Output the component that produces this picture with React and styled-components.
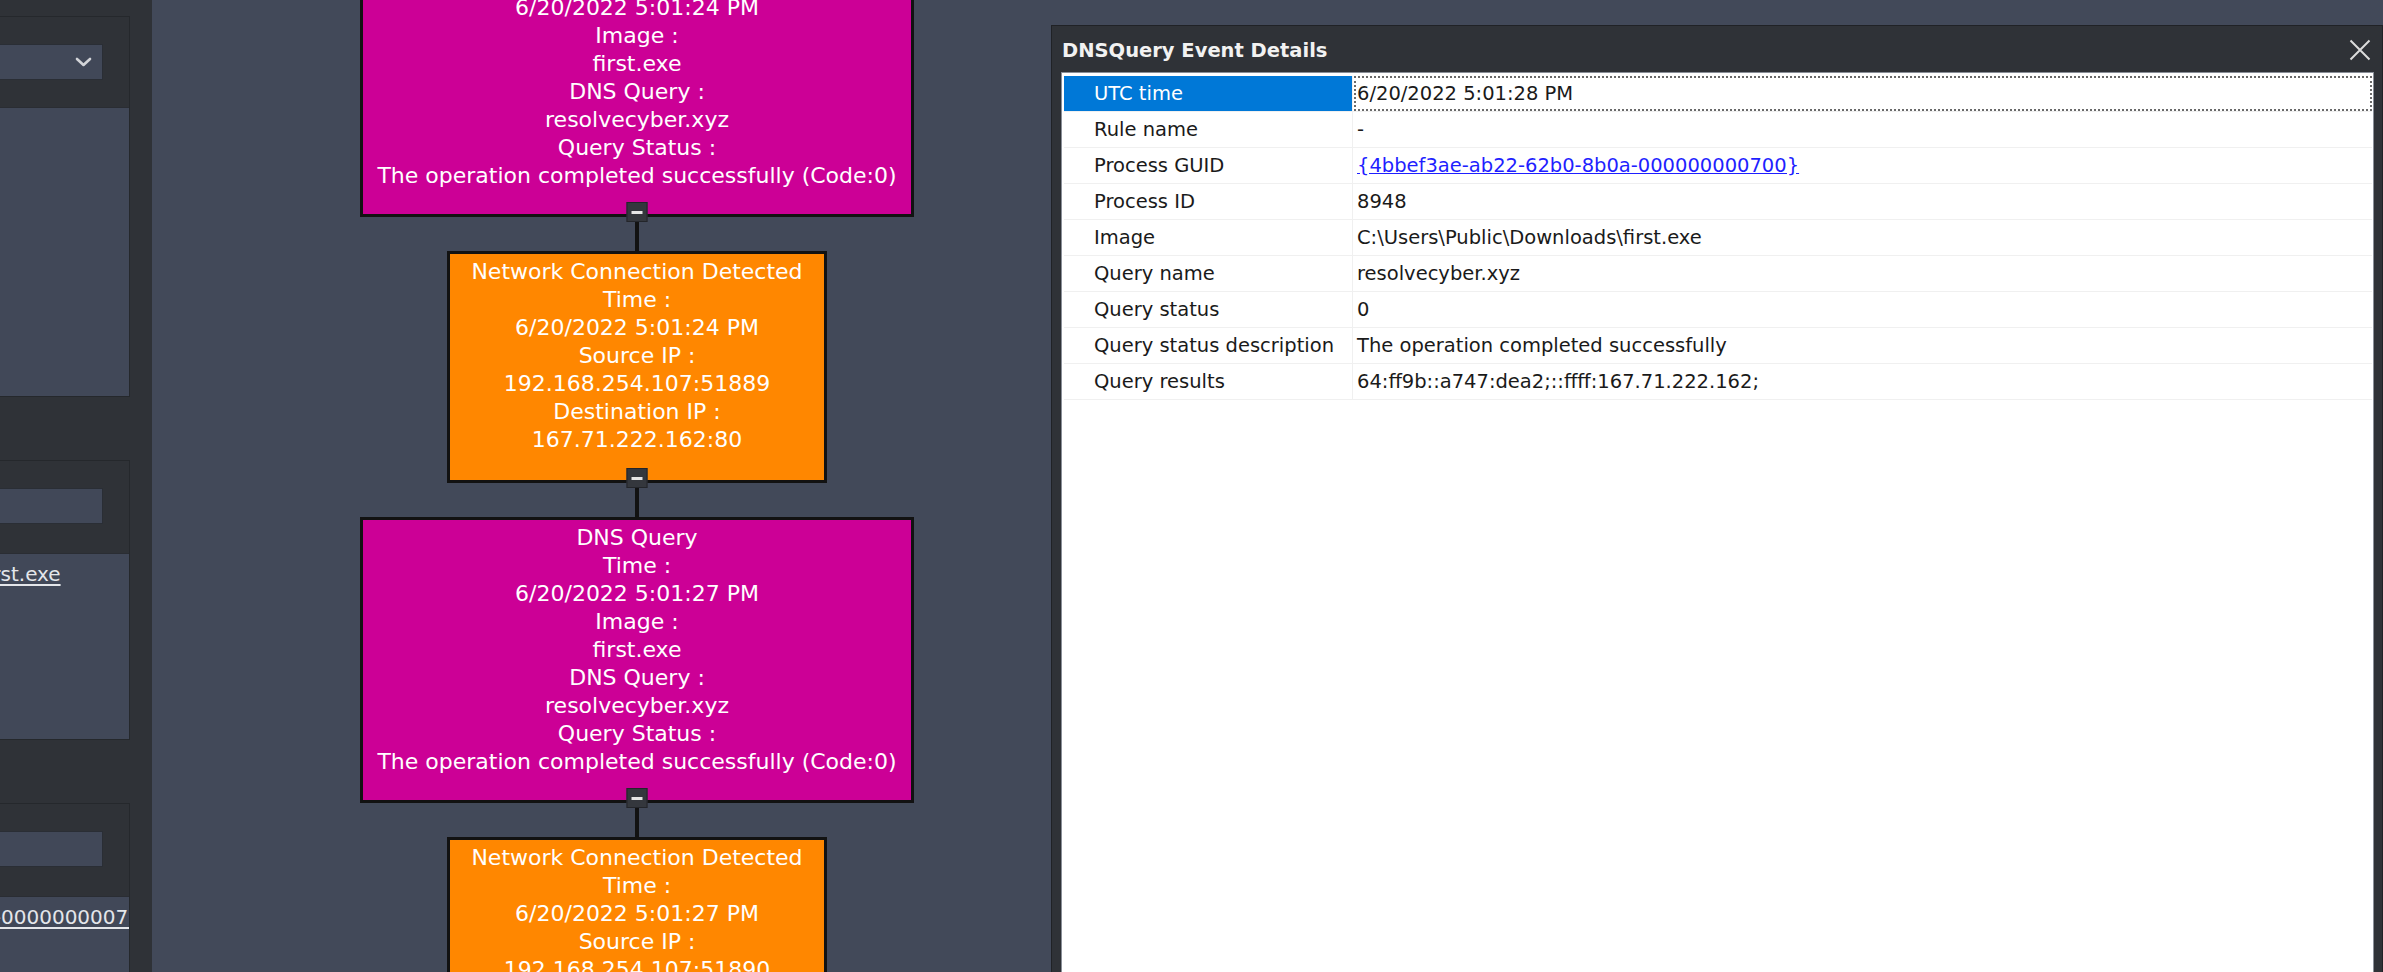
import React from "react";
import styled, { createGlobalStyle } from "styled-components";

const GlobalStyle = createGlobalStyle`
  html, body {
    margin: 0;
    padding: 0;
    background: #424959;
    overflow: hidden;
  }
  body {
    font-family: "DejaVu Sans", "Liberation Sans", sans-serif;
  }
`;

const Page = styled.div`
  display: flex;
  width: 100vw;
  height: 972px;
  overflow: hidden;
  background: #424959;
`;

/* ---------- left side panel ---------- */
const SidePanel = styled.aside`
  flex: none;
  width: 152px;
  height: 100%;
  background: #2f3237;
  overflow: hidden;
`;

const SideInner = styled.div`
  width: 450px;
  margin-left: -320px;
  padding-top: 16px;
  display: flex;
  flex-direction: column;
  gap: 63px;
`;

const GroupBox = styled.section`
  border: 1px solid #25282c;
  display: flex;
  flex-direction: column;
`;

const GroupHeader = styled.div`
  height: ${(p) => p.$h}px;
  display: flex;
  justify-content: flex-end;
  align-items: flex-start;
  box-sizing: border-box;
  padding: 27px 26px 0 0;
`;

const Field = styled.div`
  width: 320px;
  height: 36px;
  box-sizing: border-box;
  background: #414858;
  border: 1px solid #2a2e35;
  display: flex;
  align-items: center;
  justify-content: flex-end;
  padding-right: 10px;
`;

const GroupContent = styled.div`
  height: ${(p) => p.$h}px;
  box-sizing: border-box;
  background: #414858;
  border-top: 1px solid #2a2d33;
  padding: 8px 0 0 ${(p) => p.$indent || 26}px;
  overflow: hidden;
  white-space: nowrap;
`;

const PanelLink = styled.span`
  display: block;
  font-size: 20px;
  line-height: 24px;
  color: #e4e6ea;
  text-decoration: underline;
  text-underline-offset: 3px;
`;

/* ---------- canvas / diagram ---------- */
const Canvas = styled.main`
  flex: 1;
  position: relative;
  overflow: hidden;
`;

const FlowColumn = styled.div`
  width: 554px;
  margin: -69px 0 0 208px;
  display: flex;
  flex-direction: column;
  align-items: center;
`;

const Node = styled.div`
  position: relative;
  box-sizing: border-box;
  width: ${(p) => (p.$kind === "dns" ? 554 : 380)}px;
  background: ${(p) => (p.$kind === "dns" ? "#cc0096" : "#ff8700")};
  border: 3px solid #121212;
  padding: 4px 0 ${(p) => (p.$kind === "dns" ? 24 : 26)}px;
  text-align: center;
  color: #fff;
  font-size: 22px;
  line-height: 28px;
  white-space: nowrap;
`;

const NodeLine = styled.div``;

const CollapseButton = styled.div`
  position: absolute;
  left: 50%;
  bottom: -8px;
  transform: translateX(-50%);
  width: 21px;
  height: 20px;
  box-sizing: border-box;
  background: #34373d;
  border: 1px solid #23252a;
  display: flex;
  align-items: center;
  justify-content: center;
  &::after {
    content: "";
    width: 11px;
    height: 3px;
    background: #e6e6e6;
  }
`;

const Connector = styled.div`
  width: 4px;
  height: 34px;
  background: #121212;
`;

/* ---------- dialog ---------- */
const Dialog = styled.div`
  position: absolute;
  left: 899px;
  right: 0;
  top: 25px;
  bottom: -20px;
  background: #2f3237;
  border: 1px solid #202226;
  padding: 0 8px 0 9px;
  display: flex;
  flex-direction: column;
`;

const TitleBar = styled.div`
  height: 46px;
  flex: none;
  box-sizing: border-box;
  padding: 2px 0 0 1px;
  display: flex;
  align-items: center;
  justify-content: space-between;
`;

const Title = styled.div`
  color: #f2f2f2;
  font-weight: bold;
  font-size: 19.5px;
`;

const CloseBtn = styled.div`
  width: 22px;
  height: 22px;
  margin-right: 3px;
  display: flex;
  align-items: center;
  justify-content: center;
`;

const ListView = styled.div`
  flex: 1;
  background: #ffffff;
  border: 1px solid #8a8f98;
  padding: 3px 1px 0 2px;
`;

const Row = styled.div`
  display: grid;
  grid-template-columns: 289px 1fr;
  height: 36px;
  box-sizing: border-box;
  border-bottom: 1px solid #f0f0f0;
  font-size: 19.5px;
  color: #1a1a1a;
`;

const LabelCell = styled.div`
  display: flex;
  align-items: center;
  padding-left: 30px;
  border-right: 1px solid #f0f0f0;
  background: ${(p) => (p.$selected ? "#0078d7" : "transparent")};
  color: ${(p) => (p.$selected ? "#ffffff" : "#1a1a1a")};
  white-space: nowrap;
`;

const ValueCell = styled.div`
  display: flex;
  align-items: center;
  box-sizing: border-box;
  padding-left: 1px;
  margin-left: 1px;
  border: 2px dotted ${(p) => (p.$focused ? "#6a6a6a" : "transparent")};
  white-space: nowrap;
`;

const LinkText = styled.span`
  color: #1f1fff;
  text-decoration: underline;
`;

const nodes = [
  {
    kind: "dns",
    lines: [
      "DNS Query",
      "Time :",
      "6/20/2022 5:01:24 PM",
      "Image :",
      "first.exe",
      "DNS Query :",
      "resolvecyber.xyz",
      "Query Status :",
      "The operation completed successfully (Code:0)",
    ],
  },
  {
    kind: "net",
    lines: [
      "Network Connection Detected",
      "Time :",
      "6/20/2022 5:01:24 PM",
      "Source IP :",
      "192.168.254.107:51889",
      "Destination IP :",
      "167.71.222.162:80",
    ],
  },
  {
    kind: "dns",
    lines: [
      "DNS Query",
      "Time :",
      "6/20/2022 5:01:27 PM",
      "Image :",
      "first.exe",
      "DNS Query :",
      "resolvecyber.xyz",
      "Query Status :",
      "The operation completed successfully (Code:0)",
    ],
  },
  {
    kind: "net",
    lines: [
      "Network Connection Detected",
      "Time :",
      "6/20/2022 5:01:27 PM",
      "Source IP :",
      "192.168.254.107:51890",
      "Destination IP :",
      "167.71.222.162:80",
    ],
  },
];

const details = [
  ["UTC time", "6/20/2022 5:01:28 PM"],
  ["Rule name", "-"],
  ["Process GUID", "{4bbef3ae-ab22-62b0-8b0a-000000000700}", true],
  ["Process ID", "8948"],
  ["Image", "C:\\Users\\Public\\Downloads\\first.exe"],
  ["Query name", "resolvecyber.xyz"],
  ["Query status", "0"],
  ["Query status description", "The operation completed successfully"],
  ["Query results", "64:ff9b::a747:dea2;::ffff:167.71.222.162;"],
];

const Chevron = () => (
  <svg width="17" height="10" viewBox="0 0 17 10">
    <polyline
      points="2,2 8.5,8 15,2"
      fill="none"
      stroke="#d2d4d8"
      strokeWidth="2.6"
      strokeLinecap="round"
      strokeLinejoin="round"
    />
  </svg>
);

const CloseIcon = () => (
  <svg width="22" height="22" viewBox="0 0 22 22">
    <path d="M1.5 1.5 L20.5 20.5 M20.5 1.5 L1.5 20.5" stroke="#dcdcdc" strokeWidth="2" />
  </svg>
);

export default function App() {
  return (
    <>
      <GlobalStyle />
      <Page>
        <SidePanel>
          <SideInner>
            <GroupBox>
              <GroupHeader $h={90}>
                <Field>
                  <Chevron />
                </Field>
              </GroupHeader>
              <GroupContent $h={289} />
            </GroupBox>
            <GroupBox>
              <GroupHeader $h={92}>
                <Field />
              </GroupHeader>
              <GroupContent $h={186}>
                <PanelLink>C:\Users\Public\Downloads\first.exe</PanelLink>
              </GroupContent>
            </GroupBox>
            <GroupBox>
              <GroupHeader $h={92}>
                <Field />
              </GroupHeader>
              <GroupContent $h={200} $indent={32}>
                <PanelLink>{"{4bbef3ae-ab22-62b0-8b0a-000000000700}"}</PanelLink>
              </GroupContent>
            </GroupBox>
          </SideInner>
        </SidePanel>

        <Canvas>
          <FlowColumn>
            {nodes.map((n, i) => (
              <React.Fragment key={i}>
                {i > 0 && <Connector />}
                <Node $kind={n.kind}>
                  {n.lines.map((l, j) => (
                    <NodeLine key={j}>{l}</NodeLine>
                  ))}
                  <CollapseButton />
                </Node>
              </React.Fragment>
            ))}
          </FlowColumn>

          <Dialog>
            <TitleBar>
              <Title>DNSQuery Event Details</Title>
              <CloseBtn>
                <CloseIcon />
              </CloseBtn>
            </TitleBar>
            <ListView>
              {details.map(([label, value, link], i) => (
                <Row key={label}>
                  <LabelCell $selected={i === 0}>{label}</LabelCell>
                  <ValueCell $focused={i === 0}>
                    {link ? <LinkText>{value}</LinkText> : value}
                  </ValueCell>
                </Row>
              ))}
            </ListView>
          </Dialog>
        </Canvas>
      </Page>
    </>
  );
}
